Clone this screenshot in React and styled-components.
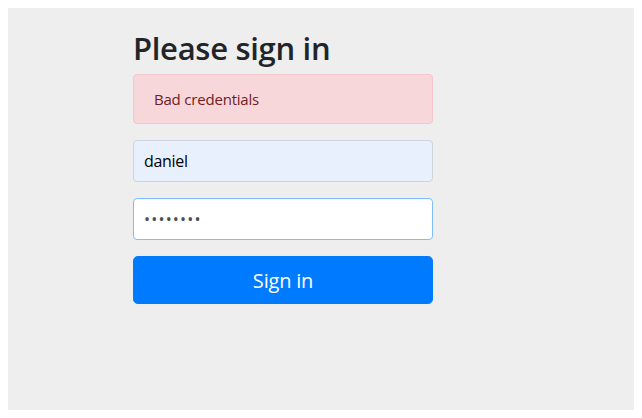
import React, { useState } from "react";
import styled, { createGlobalStyle } from "styled-components";

const GlobalStyle = createGlobalStyle`
  html, body {
    margin: 0;
    background: #ffffff;
  }
  body {
    padding: 8px;
    font-family: "Open Sans", "Noto Sans", sans-serif;
  }
`;

const App = () => {
  const [username, setUsername] = useState("daniel");
  const [password, setPassword] = useState("password");

  return (
    <>
      <GlobalStyle />
      <Page>
        <Form onSubmit={(e) => e.preventDefault()}>
          <Heading>Please sign in</Heading>
          <Alert>Bad credentials</Alert>
          <Field>
            <Input
              type="text"
              value={username}
              autofill
              onChange={(e) => setUsername(e.target.value)}
              placeholder="Username"
            />
          </Field>
          <Field>
            <Input
              type="password"
              value={password}
              focused
              onChange={(e) => setPassword(e.target.value)}
              placeholder="Password"
            />
          </Field>
          <SubmitBtn type="submit">Sign in</SubmitBtn>
        </Form>
      </Page>
    </>
  );
};

export default App;

const Page = styled.div`
  background-color: #eeeeee;
  height: 402px;
  box-sizing: border-box;
  padding: 17px 0 0 125px;
`;

const Form = styled.form`
  display: flex;
  flex-direction: column;
  width: 300px;
`;

const Heading = styled.h2`
  margin: 0 0 3px;
  padding-top: 1px;
  font-size: 31px;
  font-weight: 600;
  line-height: 45px;
  letter-spacing: -0.3px;
  color: #212529;
`;

const Alert = styled.div`
  box-sizing: border-box;
  height: 50px;
  padding: 12px 20px;
  margin-bottom: 16px;
  font-size: 15px;
  line-height: 24px;
  letter-spacing: -0.2px;
  color: #721c24;
  background-color: #f8d7da;
  border: 1px solid #f5c6cb;
  border-radius: 4px;
`;

const Field = styled.p`
  margin: 0 0 16px;
`;

const Input = styled.input.withConfig({
  shouldForwardProp: (prop) => !["autofill", "focused"].includes(prop),
})`
  display: block;
  box-sizing: border-box;
  width: 100%;
  height: 42px;
  padding: 0 10px;
  font-family: "Open Sans", "Noto Sans", sans-serif;
  font-size: 16px;
  letter-spacing: ${(p) => (p.type === "password" ? "1.2px" : "-0.3px")};
  color: ${(p) => (p.autofill ? "#000000" : "#495057")};
  background-color: ${(p) => (p.autofill ? "#e8f0fe" : "#ffffff")};
  border: 1px solid ${(p) => (p.focused ? "#80bdff" : "#ced4da")};
  border-radius: 4px;
  outline: none;
`;

const SubmitBtn = styled.button`
  height: 48px;
  padding: 0;
  font-family: "Open Sans", "Noto Sans", sans-serif;
  font-size: 20px;
  letter-spacing: -0.2px;
  color: #ffffff;
  background-color: #007bff;
  border: 1px solid #007bff;
  border-radius: 4.8px;
  cursor: pointer;
`;
